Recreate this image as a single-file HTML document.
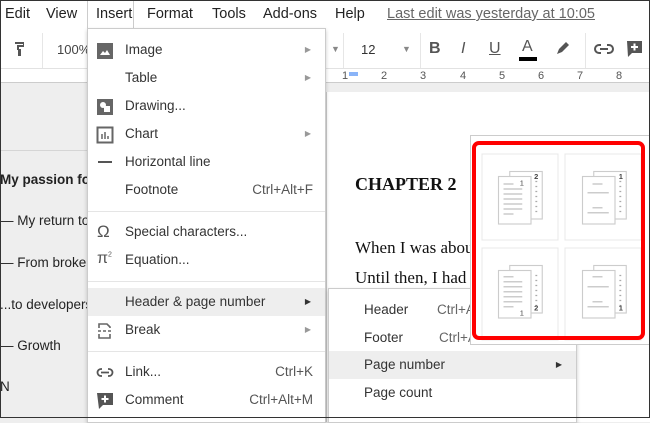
<!DOCTYPE html>
<html><head><meta charset="utf-8"><style>
*{margin:0;padding:0;box-sizing:border-box}
body{width:650px;height:418px;overflow:hidden;position:relative;background:#eee;font-family:"Liberation Sans",Arial,sans-serif;color:#222}
.abs{position:absolute}
#frame{position:absolute;left:0;top:0;width:650px;height:418px;border:1px solid #333;pointer-events:none;z-index:50}
#menubar{left:0;top:0;width:650px;height:32px;background:#fff}
#menubar span{position:absolute;top:6px;font-size:14.5px;color:#222}
#toolbar{left:0;top:32px;width:650px;height:37px;background:#fff;border-bottom:1px solid #e2e2e2}
#ruler{left:0;top:69px;width:650px;height:14px;background:#fff;border-bottom:1px solid #ccc}
.rn{position:absolute;top:70px;font-size:11px;color:#555}
.sep{position:absolute;top:33px;width:1px;height:35px;background:#e6e6e6}
#page{left:326px;top:92px;width:330px;height:330px;background:#fff;border-left:1px solid #ccc}
.side{position:absolute;font-size:13.5px;color:#222;left:0}
#menu{left:87px;top:28px;width:239px;height:395px;background:#fff;border:1px solid #ccc;box-shadow:0 2px 4px rgba(0,0,0,.2);z-index:10}
.mi{position:absolute;left:0;width:237px;height:28px;font-size:13.5px;color:#333}
.mi .t{position:absolute;left:37px;top:6px}
.mi .k{position:absolute;right:12px;top:6px;color:#555}
.mi .a{position:absolute;right:14px;top:9px;font-size:8px;color:#999}
.mi .ic{position:absolute;left:8px;top:6px}
.hr{position:absolute;left:0;width:237px;height:1px;background:#e5e5e5}
#sub{left:328px;top:288px;width:249px;height:135px;background:#fff;border:1px solid #ccc;box-shadow:0 2px 4px rgba(0,0,0,.2);z-index:11}
#panel{left:470px;top:135px;width:185px;height:210px;background:#fff;border:1px solid #ccc;z-index:12}
#red{left:472px;top:141px;width:173px;height:199px;border:4px solid #f00;border-radius:7px;z-index:14}
</style></head><body>
<div id="menubar" class="abs">
<span style="left:5px">Edit</span><span style="left:46px">View</span>
<span style="left:87px;top:0;width:47px;height:30px;border:1px solid #ccc;border-bottom:none;background:#fff"></span>
<span style="left:96px">Insert</span><span style="left:147px">Format</span><span style="left:212px">Tools</span><span style="left:263px">Add-ons</span><span style="left:335px">Help</span>
<span style="left:387px;color:#666;text-decoration:underline">Last edit was yesterday at 10:05</span>
</div>
<div id="toolbar" class="abs"></div>
<div class="sep" style="left:42px"></div><div class="sep" style="left:343px"></div><div class="sep" style="left:420px"></div><div class="sep" style="left:585px"></div>
<svg class="abs" style="left:14px;top:41px" width="14" height="16"><path d="M1 1h9v5H5v2h2v7H4V9H3V4h6V3H1z" fill="#555"/></svg>
<span class="abs" style="left:57px;top:42px;font-size:13px;color:#444">100%</span>
<span class="abs" style="left:331px;top:44px;font-size:9px;color:#888">▼</span>
<span class="abs" style="left:361px;top:42px;font-size:13px;color:#333">12</span>
<span class="abs" style="left:402px;top:44px;font-size:9px;color:#888">▼</span>
<span class="abs" style="left:429px;top:40px;font-size:16px;font-weight:bold;color:#555">B</span>
<span class="abs" style="left:461px;top:40px;font-size:16px;font-style:italic;color:#555">I</span>
<span class="abs" style="left:489px;top:40px;font-size:16px;text-decoration:underline;color:#555">U</span>
<span class="abs" style="left:522px;top:38px;font-size:16px;color:#555">A</span>
<div class="abs" style="left:519px;top:57px;width:18px;height:4px;background:#000"></div>
<svg class="abs" style="left:555px;top:40px" width="16" height="16"><path d="M2 14l2-5 7-7 3 3-7 7z" fill="#555"/></svg>
<svg class="abs" style="left:594px;top:43px" width="20" height="12"><path d="M7 2H5a4 4 0 000 8h2M13 2h2a4 4 0 010 8h-2M6 6h8" stroke="#555" stroke-width="2" fill="none"/></svg>
<svg class="abs" style="left:626px;top:40px" width="18" height="18"><path d="M1 1h15v12H6l-4 4z" fill="#555"/><path d="M8.5 3.5v7M5 7h7" stroke="#fff" stroke-width="2"/></svg>
<div id="ruler" class="abs"></div>
<span class="rn" style="left:342px">1</span><span class="rn" style="left:381px">2</span><span class="rn" style="left:420px">3</span><span class="rn" style="left:460px">4</span><span class="rn" style="left:499px">5</span><span class="rn" style="left:538px">6</span><span class="rn" style="left:577px">7</span><span class="rn" style="left:616px">8</span>
<div class="abs" style="left:349px;top:72px;width:9px;height:4px;background:#8ab4f8"></div>
<div class="abs" style="left:0;top:150px;width:87px;height:1px;background:#d5d5d5"></div>
<div id="page" class="abs"></div>
<div class="side" style="top:172px;font-weight:bold">My passion for</div>
<div class="side" style="top:213px">— My return to</div>
<div class="side" style="top:255px">— From broker</div>
<div class="side" style="top:297px">...to developers</div>
<div class="side" style="top:338px">— Growth</div>
<div class="side" style="top:379px">N</div>
<div class="abs" style="left:355px;top:174px;font-family:'Liberation Serif',serif;font-weight:bold;font-size:18px;color:#111">CHAPTER 2</div>
<div class="abs" style="left:355px;top:238px;font-family:'Liberation Serif',serif;font-size:17px;color:#111">When I was about</div>
<div class="abs" style="left:355px;top:268px;font-family:'Liberation Serif',serif;font-size:17px;color:#111">Until then, I had a</div>

<div id="menu" class="abs">
<div class="mi" style="top:7px"><svg class="ic" width="18" height="18"><rect x="1" y="1" width="16" height="16" fill="#666"/><path d="M4 13l3-4 2 2 2-3 3 5z" fill="#fff"/></svg><span class="t">Image</span><span class="a">▶</span></div>
<div class="mi" style="top:35px"><span class="t">Table</span><span class="a">▶</span></div>
<div class="mi" style="top:63px"><svg class="ic" width="18" height="18"><rect x="1" y="1" width="16" height="16" fill="#666"/><circle cx="7" cy="7" r="3" fill="#fff"/><rect x="8" y="8" width="6" height="6" fill="#fff"/></svg><span class="t">Drawing...</span></div>
<div class="mi" style="top:91px"><svg class="ic" width="18" height="18"><rect x="1.5" y="1.5" width="15" height="15" fill="none" stroke="#666" stroke-width="2"/><path d="M6 13V8M9 13V6M12 13V10" stroke="#666" stroke-width="1.5"/></svg><span class="t">Chart</span><span class="a">▶</span></div>
<div class="mi" style="top:119px"><div class="abs" style="left:10px;top:13px;width:14px;height:2px;background:#555"></div><span class="t">Horizontal line</span></div>
<div class="mi" style="top:147px"><span class="t">Footnote</span><span class="k">Ctrl+Alt+F</span></div>
<div class="hr" style="top:182px"></div>
<div class="mi" style="top:189px"><span class="ic" style="left:9px;top:4px;font-size:17px;color:#555">Ω</span><span class="t">Special characters...</span></div>
<div class="mi" style="top:217px"><span class="ic" style="left:9px;top:4px;font-size:16px;color:#555">π<sup style="font-size:7px">2</sup></span><span class="t">Equation...</span></div>
<div class="hr" style="top:252px"></div>
<div class="mi" style="top:259px;background:#eee;height:28px"><span class="t">Header &amp; page number</span><span class="a" style="color:#333">▶</span></div>
<div class="mi" style="top:287px"><svg class="ic" width="18" height="18"><path d="M3 6V2h8l3 3v1M3 12v4h11v-4M2 9h3M7 9h3M12 9h3" stroke="#666" stroke-width="1.6" fill="none"/></svg><span class="t">Break</span><span class="a">▶</span></div>
<div class="hr" style="top:322px"></div>
<div class="mi" style="top:329px"><svg class="ic" width="18" height="18" style="top:9px"><path d="M6 2H5a3.5 3.5 0 000 7h1M12 2h1a3.5 3.5 0 010 7h-1M5 5.5h8" stroke="#555" stroke-width="1.8" fill="none"/></svg><span class="t">Link...</span><span class="k">Ctrl+K</span></div>
<div class="mi" style="top:357px"><svg class="ic" width="18" height="18"><path d="M1 1h16v12H7l-4 4z" fill="#555"/><path d="M9 3.5v7M5.5 7h7" stroke="#fff" stroke-width="2"/></svg><span class="t">Comment</span><span class="k">Ctrl+Alt+M</span></div>
</div>

<div id="sub" class="abs">
<div class="mi" style="top:7px;width:247px"><span class="t" style="left:35px">Header</span><span class="abs" style="left:108px;top:6px;color:#666">Ctrl+Alt</span></div>
<div class="mi" style="top:35px;width:247px"><span class="t" style="left:35px">Footer</span><span class="abs" style="left:110px;top:6px;color:#666">Ctrl+Alt</span></div>
<div class="mi" style="top:62px;width:247px;background:#eee"><span class="t" style="left:35px">Page number</span><span class="a" style="color:#333">▶</span></div>
<div class="mi" style="top:90px;width:247px"><span class="t" style="left:35px">Page count</span></div>
</div>

<div id="panel" class="abs"></div>
<svg class="abs" style="left:470px;top:135px;z-index:13" width="185" height="210">
<defs><g id="pg"><rect x="9" y="-4" width="26" height="38" fill="#fff" stroke="#ccc" stroke-width="0.9"/><rect x="0" y="0" width="26" height="38" fill="#fff" stroke="#ccc" stroke-width="0.9"/><path d="M29.5 4h1.5M29.5 8h1.5M29.5 12h1.5M29.5 16h1.5M29.5 20h1.5M29.5 24h1.5M29.5 28h1.5" stroke="#aaa"/></g></defs>
<rect x="12" y="19" width="76" height="86" fill="#fff" stroke="#e8e8e8"/>
<rect x="95" y="19" width="76" height="86" fill="#fff" stroke="#e8e8e8"/>
<rect x="12" y="113" width="76" height="92" fill="#fff" stroke="#e8e8e8"/>
<rect x="95" y="113" width="76" height="92" fill="#fff" stroke="#e8e8e8"/>
<g transform="translate(28.5,41.5) scale(1.25)"><use href="#pg"/><path d="M4 6h8M4 10h15M4 14h15M4 18h15M4 22h15M4 26h15M4 30h8" stroke="#ccc" stroke-width="1.2"/><text x="17" y="7" font-size="6" fill="#444" font-family="Liberation Sans">1</text><text x="28.5" y="2" font-size="6" fill="#444" font-weight="bold" font-family="Liberation Sans">2</text></g>
<g transform="translate(112.5,41.5) scale(1.25)"><use href="#pg"/><path d="M8 6h8M4 13h17M8 25h8M4 29h17" stroke="#ccc" stroke-width="1.2"/><text x="29" y="2" font-size="6" fill="#444" font-weight="bold" font-family="Liberation Sans">1</text></g>
<g transform="translate(28.5,135.5) scale(1.25)"><use href="#pg"/><path d="M4 5h8M4 9h15M4 13h15M4 17h15M4 21h15M4 25h15M4 29h8" stroke="#ccc" stroke-width="1.2"/><text x="17" y="36" font-size="6" fill="#444" font-family="Liberation Sans">1</text><text x="28.5" y="32" font-size="6" fill="#444" font-weight="bold" font-family="Liberation Sans">2</text></g>
<g transform="translate(112.5,135.5) scale(1.25)"><use href="#pg"/><path d="M8 5h8M4 13h17M8 25h8M4 29h17" stroke="#ccc" stroke-width="1.2"/><text x="29" y="32" font-size="6" fill="#444" font-weight="bold" font-family="Liberation Sans">1</text></g>
</svg>
<div id="red" class="abs"></div>
<div id="frame"></div>
</body></html>
